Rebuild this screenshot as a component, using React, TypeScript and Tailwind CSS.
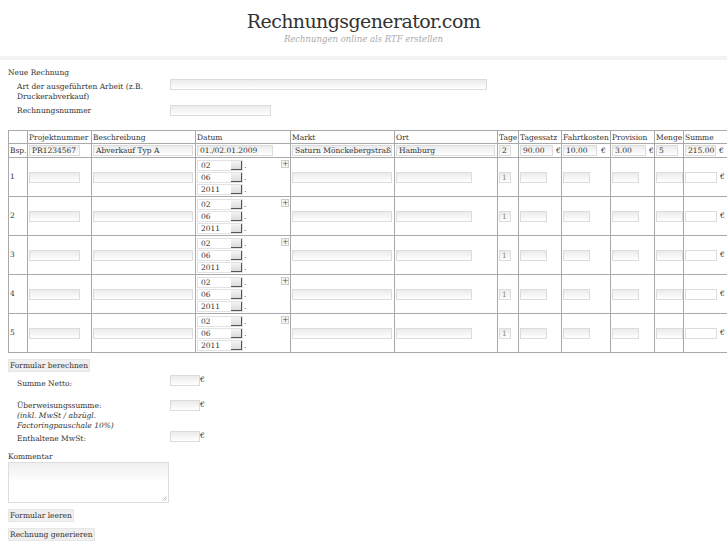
import React from "react";

const inpBase =
  "h-[11px] border border-[#dcdcdc] bg-gradient-to-b from-[#ebebeb] to-white text-[7.5px] leading-[9px] px-[2px] overflow-hidden whitespace-nowrap text-[#333]";

function Inp({ cls, v, dark }: { cls: string; v?: string; dark?: boolean }) {
  return (
    <div className={`${inpBase} ${dark ? "border-[#a8a8a8] from-white" : ""} ${cls}`}>
      {v}
    </div>
  );
}

function Sel({ v }: { v: string }) {
  return (
    <div className="flex items-center h-[12px]">
      <div className="flex w-[46px] h-[11px] border border-[#e2e2e2] bg-white">
        <div className="flex-1 text-[7.5px] leading-[9px] pl-[3px] text-[#333]">{v}</div>
        <div className="w-[11px] h-full bg-gradient-to-b from-[#f4f4f4] to-[#dcdcdc] border-r border-b border-[#555]" />
      </div>
      <span className="text-[7.5px] leading-[9px] ml-[1px]">.</span>
    </div>
  );
}

function Plus() {
  return (
    <div className="w-[8px] h-[8px] border border-[#ccc] bg-[#f4f4f4] text-[8px] leading-[6px] text-center text-[#555]">
      +
    </div>
  );
}

const td = "border border-[#a9a9a9] p-0 align-middle";

function DataRow({ n }: { n: number }) {
  return (
    <tr className="h-[39px]">
      <td className={`${td} pl-[1px] text-[7.5px]`}>{n}</td>
      <td className={td}>
        <div className="pl-[1px]"><Inp cls="w-[51px]" /></div>
      </td>
      <td className={td}>
        <div className="pl-[1px]"><Inp cls="w-[100px]" /></div>
      </td>
      <td className={`${td} align-top`}>
        <div className="flex pl-[1px] pt-[1px] pr-[1px]">
          <div className="flex flex-col">
            <Sel v="02" />
            <Sel v="06" />
            <Sel v="2011" />
          </div>
          <div className="ml-auto pt-[1px]"><Plus /></div>
        </div>
      </td>
      <td className={td}>
        <div className="pl-[1px]"><Inp cls="w-[100px]" /></div>
      </td>
      <td className={td}>
        <div className="pl-[1px]"><Inp cls="w-[76px]" /></div>
      </td>
      <td className={td}>
        <div className="pl-[1px]"><Inp cls="w-[12px] text-[#888]" v="1" /></div>
      </td>
      <td className={td}>
        <div className="pl-[1px]"><Inp cls="w-[27px]" /></div>
      </td>
      <td className={td}>
        <div className="pl-[1px]"><Inp cls="w-[27px]" /></div>
      </td>
      <td className={td}>
        <div className="pl-[1px]"><Inp cls="w-[27px]" /></div>
      </td>
      <td className={td}>
        <div className="pl-[1px]"><Inp cls="w-[27px]" /></div>
      </td>
      <td className={td}>
        <div className="flex items-center pl-[1px]">
          <Inp cls="w-[32px]" dark />
          <span className="text-[7.5px] ml-[3px]">€</span>
        </div>
      </td>
    </tr>
  );
}

function Btn({ label }: { label: string }) {
  return (
    <div className="flex">
      <div className="bg-[#efefef] border border-[#e6e6e6] text-[7.5px] leading-[11px] px-[1px]">{label}</div>
    </div>
  );
}

export default function App() {
  const th = "border border-[#a9a9a9] px-[1px] py-0 text-left font-normal text-[7.5px] leading-[11px] whitespace-nowrap overflow-hidden";
  return (
    <div className="w-[727px] overflow-hidden bg-white text-[#333] font-['DejaVu_Serif',serif]">
      <div className="flex flex-col items-center pt-[10px] h-[56px]">
        <div className="text-[19px] leading-[23px] tracking-[-0.6px] text-[#333]">Rechnungsgenerator.com</div>
        <div className="text-[8.5px] leading-[11px] italic text-[#aaa] mt-[1px]">Rechnungen online als RTF erstellen</div>
      </div>
      <div className="h-[4px] bg-[#f3f3f3]" />

      <div className="pl-[8px] pt-[8px]">
        <div className="text-[7.5px] leading-[10px]">Neue Rechnung</div>
        <div className="pl-[9px]">
          <div className="flex mt-[1px]">
            <div className="w-[153px] text-[7.5px] leading-[10px] pt-[3px]">
              Art der ausgeführten Arbeit (z.B.
              <br />
              Druckerabverkauf)
            </div>
            <Inp cls="w-[317px]" />
          </div>
          <div className="flex mt-[1px]">
            <div className="w-[153px] text-[7.5px] leading-[10px] pt-[3px]">Rechnungsnummer</div>
            <Inp cls="w-[101px] mt-[2px]" />
          </div>
        </div>

        <div className="w-[740px] mt-[14px]">
          <table className="border-collapse table-fixed w-[740px]">
            <colgroup>
              <col className="w-[19px]" />
              <col className="w-[64px]" />
              <col className="w-[104px]" />
              <col className="w-[95px]" />
              <col className="w-[104px]" />
              <col className="w-[103px]" />
              <col className="w-[21px]" />
              <col className="w-[43px]" />
              <col className="w-[49px]" />
              <col className="w-[44px]" />
              <col className="w-[29px]" />
              <col className="w-[165px]" />
            </colgroup>
            <thead>
              <tr className="h-[13px]">
                <th className={th}></th>
                <th className={th}>Projektnummer</th>
                <th className={th}>Beschreibung</th>
                <th className={th}>Datum</th>
                <th className={th}>Markt</th>
                <th className={th}>Ort</th>
                <th className={th}>Tage</th>
                <th className={th}>Tagessatz</th>
                <th className={th}>Fahrtkosten</th>
                <th className={th}>Provision</th>
                <th className={th}>Menge</th>
                <th className={th}>Summe</th>
              </tr>
            </thead>
            <tbody>
              <tr className="h-[14px]">
                <td className={`${td} pl-[1px] text-[7.5px]`}>Bsp.</td>
                <td className={td}><div className="pl-[1px]"><Inp cls="w-[51px]" v="PR1234567" /></div></td>
                <td className={td}><div className="pl-[1px]"><Inp cls="w-[100px]" v="Abverkauf Typ A" /></div></td>
                <td className={td}><div className="pl-[1px]"><Inp cls="w-[76px]" v="01./02.01.2009" /></div></td>
                <td className={td}><div className="pl-[1px]"><Inp cls="w-[100px]" v="Saturn Mönckebergstraße" /></div></td>
                <td className={td}><div className="pl-[1px]"><Inp cls="w-[99px]" v="Hamburg" /></div></td>
                <td className={td}><div className="pl-[1px]"><Inp cls="w-[12px]" v="2" /></div></td>
                <td className={td}>
                  <div className="flex items-center pl-[1px]">
                    <Inp cls="w-[33px]" v="90.00" />
                    <span className="text-[7.5px] ml-[3px]">€</span>
                  </div>
                </td>
                <td className={td}>
                  <div className="flex items-center pl-[1px]">
                    <Inp cls="w-[34px]" v="10.00" />
                    <span className="text-[7.5px] ml-[4px]">€</span>
                  </div>
                </td>
                <td className={td}>
                  <div className="flex items-center pl-[1px]">
                    <Inp cls="w-[34px]" v="3.00" />
                    <span className="text-[7.5px] ml-[3px]">€</span>
                  </div>
                </td>
                <td className={td}><div className="pl-[1px]"><Inp cls="w-[22px]" v="5" /></div></td>
                <td className={td}>
                  <div className="flex items-center pl-[1px]">
                    <Inp cls="w-[31px]" v="215.00" />
                    <span className="text-[7.5px] ml-[3px]">€</span>
                  </div>
                </td>
              </tr>
              {[1, 2, 3, 4, 5].map((n) => (
                <DataRow key={n} n={n} />
              ))}
            </tbody>
          </table>
        </div>

        <div className="mt-[6px]">
          <Btn label="Formular berechnen" />
        </div>

        <div className="pl-[9px] mt-[3px]">
          <div className="flex">
            <div className="w-[153px] text-[7.5px] leading-[10px] pt-[4px]">Summe Netto:</div>
            <div className="flex items-start">
              <Inp cls="w-[30px]" />
              <span className="text-[7.5px] leading-[9px]">€</span>
            </div>
          </div>
          <div className="flex mt-[11px]">
            <div className="w-[153px] text-[7.5px] leading-[10px] pt-[1px]">
              Überweisungssumme:
              <br />
              <i>(inkl. MwSt / abzügl.</i>
              <br />
              <i>Factoringpauschale 10%)</i>
            </div>
            <div className="flex items-start">
              <Inp cls="w-[30px]" />
              <span className="text-[7.5px] leading-[9px]">€</span>
            </div>
          </div>
          <div className="flex">
            <div className="w-[153px] text-[7.5px] leading-[10px] pt-[3px]">Enthaltene MwSt:</div>
            <div className="flex items-start">
              <Inp cls="w-[30px]" />
              <span className="text-[7.5px] leading-[9px]">€</span>
            </div>
          </div>
        </div>

        <div className="text-[7.5px] leading-[10px] mt-[8px]">Kommentar</div>
        <div className="relative w-[161px] h-[41px] border border-[#ddd] bg-gradient-to-b from-[#efefef] via-white to-white">
          <svg className="absolute right-[1px] bottom-[1px]" width="5" height="5" viewBox="0 0 5 5">
            <path d="M4.5 0.5 L0.5 4.5 M4.5 2.5 L2.5 4.5" stroke="#aaa" strokeWidth="0.8" />
          </svg>
        </div>

        <div className="mt-[6px]">
          <Btn label="Formular leeren" />
        </div>
        <div className="mt-[6px]">
          <Btn label="Rechnung generieren" />
        </div>
      </div>
    </div>
  );
}
